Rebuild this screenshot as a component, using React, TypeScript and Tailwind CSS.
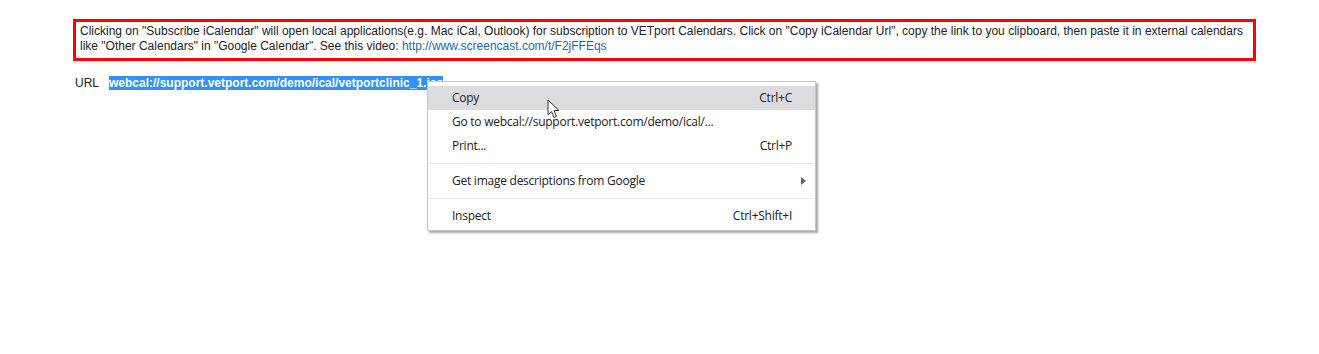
import React from "react";

const menuFont = { fontFamily: '"Segoe UI", "Open Sans", "Noto Sans", sans-serif' };

function Item({ label, shortcut, active, arrow }: { label: string; shortcut?: string; active?: boolean; arrow?: boolean }) {
  return (
    <div className={`flex h-[24px] items-center pl-[24px] pr-[23px] text-[12px] tracking-[-0.25px] text-[#202124] ${active ? "bg-[#dadce0]" : ""}`}>
      <span className="flex-1 whitespace-nowrap">{label}</span>
      {shortcut && <span className="whitespace-nowrap">{shortcut}</span>}
      {arrow && (
        <svg width="6" height="8" viewBox="0 0 6 8" className="mr-[-15px]">
          <path d="M0 0 L5 4 L0 8 Z" fill="#5f6368" />
        </svg>
      )}
    </div>
  );
}

function Sep() {
  return <div className="my-[5px] h-px bg-[#e6e6e6] mx-px" />;
}

export default function App() {
  return (
    <div className="relative h-[354px] w-[1319px] bg-white" style={{ fontFamily: '"Liberation Sans", Arial, sans-serif' }}>
      <div className="pl-[73px] pt-[19px]">
        <div className="w-[1183px] border-[3px] border-[#ff0000] px-[4px] pt-[2px] pb-[4px] text-[12px] leading-[15px] text-[#222]">
          <p>
            Clicking on "Subscribe iCalendar" will open local applications(e.g. Mac iCal, Outlook) for subscription to VETport Calendars. Click on "Copy iCalendar Url", copy the link to you clipboard, then paste it in external calendars like "Other Calendars" in "Google Calendar". See this video: <a className="text-[#1e6aa8]">http://www.screencast.com/t/F2jFFEqs</a>
          </p>
        </div>
        <div className="mt-[15px] flex items-center pl-[2px] text-[12px] leading-[14px] text-[#222]">
          <span>URL</span>
          <span className="ml-[10px] bg-[#3390ff] font-bold text-white">webcal://support.vetport.com/demo/ical/vetportclinic_1.ics</span>
        </div>
      </div>

      <div
        className="absolute left-[427px] top-[81px] w-[389px] border border-[#c6c6c6] bg-white pt-[4px] pb-[2px] shadow-[2px_2px_2px_rgba(0,0,0,0.35)]"
        style={menuFont}
      >
        <Item label="Copy" shortcut="Ctrl+C" active />
        <Item label="Go to webcal://support.vetport.com/demo/ical/..." />
        <Item label="Print..." shortcut="Ctrl+P" />
        <Sep />
        <Item label="Get image descriptions from Google" arrow />
        <Sep />
        <Item label="Inspect" shortcut="Ctrl+Shift+I" />
      </div>

      <svg className="absolute left-[547px] top-[99px]" width="13" height="20" viewBox="0 0 13 20">
        <path d="M1 1 L1 16 L4.5 12.5 L7 18.5 L9.5 17.5 L7 11.5 L12 11.5 Z" fill="white" stroke="#333" strokeWidth="1" strokeLinejoin="miter" />
      </svg>
    </div>
  );
}
